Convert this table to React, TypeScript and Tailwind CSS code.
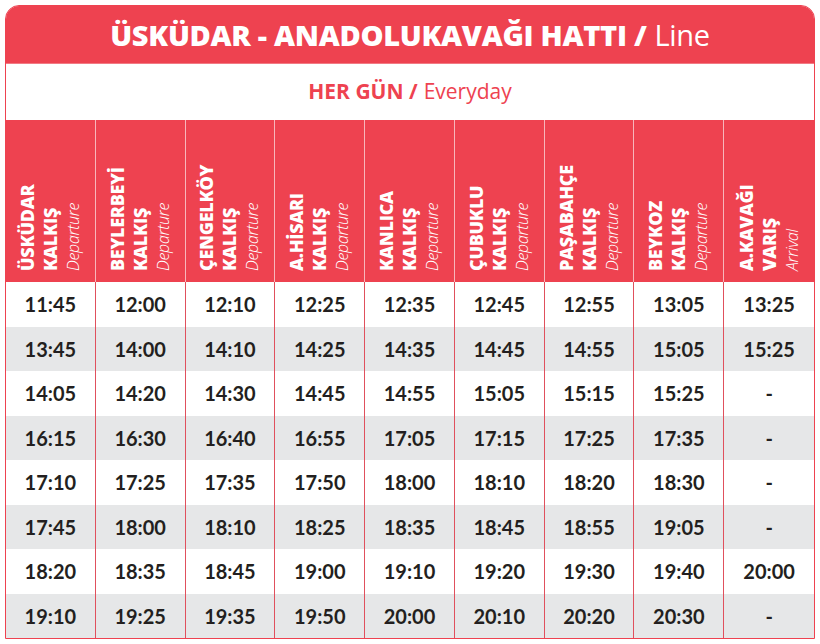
const stops = [
  { name: "ÜSKÜDAR", kind: "KALKIŞ", en: "Departure" },
  { name: "BEYLERBEYİ", kind: "KALKIŞ", en: "Departure" },
  { name: "ÇENGELKÖY", kind: "KALKIŞ", en: "Departure" },
  { name: "A.HİSARI", kind: "KALKIŞ", en: "Departure" },
  { name: "KANLICA", kind: "KALKIŞ", en: "Departure" },
  { name: "ÇUBUKLU", kind: "KALKIŞ", en: "Departure" },
  { name: "PAŞABAHÇE", kind: "KALKIŞ", en: "Departure" },
  { name: "BEYKOZ", kind: "KALKIŞ", en: "Departure" },
  { name: "A.KAVAĞI", kind: "VARIŞ", en: "Arrival" },
];

const rows = [
  ["11:45", "12:00", "12:10", "12:25", "12:35", "12:45", "12:55", "13:05", "13:25"],
  ["13:45", "14:00", "14:10", "14:25", "14:35", "14:45", "14:55", "15:05", "15:25"],
  ["14:05", "14:20", "14:30", "14:45", "14:55", "15:05", "15:15", "15:25", "-"],
  ["16:15", "16:30", "16:40", "16:55", "17:05", "17:15", "17:25", "17:35", "-"],
  ["17:10", "17:25", "17:35", "17:50", "18:00", "18:10", "18:20", "18:30", "-"],
  ["17:45", "18:00", "18:10", "18:25", "18:35", "18:45", "18:55", "19:05", "-"],
  ["18:20", "18:35", "18:45", "19:00", "19:10", "19:20", "19:30", "19:40", "20:00"],
  ["19:10", "19:25", "19:35", "19:50", "20:00", "20:10", "20:20", "20:30", "-"],
];

export default function App() {
  return (
    <div className="w-[820px] h-[644px] bg-white pt-[5px] pl-[5px]">
      <div className="w-[810px] border-[1.5px] border-[#ee4250] rounded-t-[14px] overflow-hidden">
        <div className="h-[57px] bg-[#ee4250] flex items-center justify-center text-white text-[29px] font-['Open_Sans',sans-serif] tracking-[-0.3px]">
          <span className="font-extrabold">ÜSKÜDAR - ANADOLUKAVAĞI HATTI /</span>
          <span className="font-normal ml-2">Line</span>
        </div>
        <div className="h-[57px] bg-white border-t-[1.5px] border-[#f27a84] flex items-center justify-center text-[#ee4250] text-[21px] font-['Open_Sans',sans-serif]">
          <span className="font-bold">HER GÜN /</span>
          <span className="font-normal ml-1.5">Everyday</span>
        </div>
        <div className="grid grid-cols-9 bg-[#ee4250] h-[162px]">
          {stops.map((s, i) => (
            <div
              key={s.name}
              className={`flex justify-center pb-[11px] border-[#f7b6bb] ${i < 8 ? "border-r-[1.5px]" : ""}`}
            >
              <div className="[writing-mode:vertical-rl] rotate-180 text-white font-['Open_Sans',sans-serif] leading-[23px] text-left tracking-[-0.3px]">
                <div className="font-extrabold text-[18px]">{s.name}</div>
                <div className="font-extrabold text-[18px]">{s.kind}</div>
                <div className="italic font-light text-[16px]">{s.en}</div>
              </div>
            </div>
          ))}
        </div>
        {rows.map((r, ri) => (
          <div
            key={ri}
            className={`grid grid-cols-9 h-[44.5px] ${ri % 2 === 1 ? "bg-[#e6e7e8]" : "bg-white"}`}
          >
            {r.map((t, ci) => (
              <div
                key={ci}
                className={`flex items-center justify-center text-[#231f20] text-[20px] font-bold font-['Lato',sans-serif] border-[#e0505d] ${ci < 8 ? "border-r-[1.5px]" : ""}`}
              >
                {t}
              </div>
            ))}
          </div>
        ))}
      </div>
    </div>
  );
}
